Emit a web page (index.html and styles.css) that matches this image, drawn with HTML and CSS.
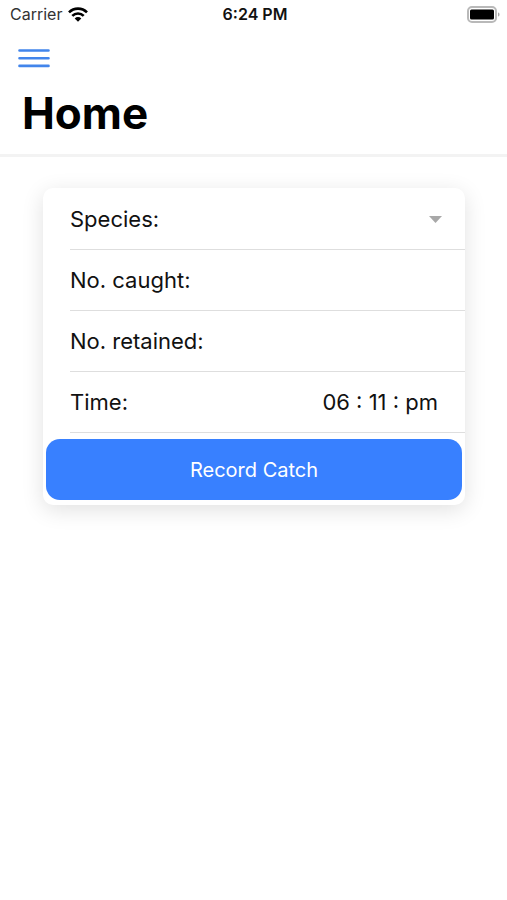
FILE: index.html
```html
<!DOCTYPE html>
<html lang="en">
<head>
<meta charset="utf-8">
<meta name="viewport" content="width=device-width, initial-scale=1">
<title>Home</title>
<link rel="stylesheet" href="styles.css">
</head>
<body>
<div class="status">
  <div class="carrier">
    <span>Carrier</span>
    <svg width="20" height="15" viewBox="0 0 20 15" aria-hidden="true">
      <g fill="none" stroke="#000" stroke-width="2.6">
        <path d="M1 5.4a12.7 12.7 0 0 1 18 0"/>
        <path d="M4.3 8.9a8 8 0 0 1 11.4 0"/>
      </g>
      <path d="M6.7 11.4a4.7 4.7 0 0 1 6.6 0L10 14.8z"/>
    </svg>
  </div>
  <span class="clock">6:24 PM</span>
  <svg class="battery" width="33" height="17" viewBox="0 0 33 17" aria-hidden="true">
    <rect x="1" y="1" width="28" height="15" rx="4" fill="#fff" stroke="#b9b9b9" stroke-width="2"/>
    <rect x="3" y="3.5" width="24" height="10" rx="1.5"/>
    <path d="M31 6.5c2 .6 2 3.4 0 4z" fill="#a8a8a8"/>
  </svg>
</div>
<header class="header">
  <button class="menu" type="button" aria-label="Menu">
    <svg width="32" height="20" viewBox="0 0 32 20" aria-hidden="true">
      <path d="M1.5 2.5h29M1.5 10.2h29M1.5 17.9h29" fill="none" stroke="#4285eb" stroke-width="2.6" stroke-linecap="round"/>
    </svg>
  </button>
  <h1>Home</h1>
</header>
<main>
  <form class="card">
    <div class="row">
      <label for="species">Species:</label>
      <select id="species" class="field"><option value=""></option></select>
      <svg width="13" height="7" viewBox="0 0 13 7" aria-hidden="true"><path d="M0 0h13L6.500 7z" fill="#a8a8a8"/></svg>
    </div>
    <div class="row">
      <label for="caught">No. caught:</label>
      <input id="caught" class="field" type="text" inputmode="numeric">
    </div>
    <div class="row">
      <label for="retained">No. retained:</label>
      <input id="retained" class="field" type="text" inputmode="numeric">
    </div>
    <div class="row">
      <label for="time">Time:</label>
      <input id="time" class="field time" type="text" value="06 : 11 : pm">
    </div>
    <button class="submit" type="button">Record Catch</button>
  </form>
</main>
</body>
</html>
```
FILE: styles.css
```css
* {
  box-sizing: border-box;
}

body {
  min-height: 100vh;
  margin: 0;
  background: #fff;
  color: #111;
  font-family: Inter, "Liberation Sans", sans-serif;
  font-size: 22px;
}

button,
input,
select {
  font: inherit;
  color: inherit;
}

.status {
  display: grid;
  grid-template-columns: 1fr auto 1fr;
  align-items: center;
  height: 28px;
  padding: 0 7px 0 10px;
  font-size: 16px;
}

.carrier {
  display: flex;
  align-items: center;
  gap: 6px;
  color: #333;
}

.clock {
  font-weight: 600;
}

.battery {
  justify-self: end;
}

.header {
  padding: 20px 18px 15px;
  border-bottom: 3px solid #f3f3f3;
}

.menu {
  display: block;
  padding: 0;
  border: 0;
  background: none;
}

.menu svg {
  display: block;
}

h1 {
  margin: 19px 4px 0;
  color: #000;
  font-size: 44px;
  line-height: 52px;
  font-weight: 700;
}

main {
  padding: 31px 42px 40px 43px;
}

.card {
  padding: 1px 0 5px;
  border-radius: 10px;
  background: #fff;
  box-shadow: 0 5px 22px rgba(0, 0, 0, 0.12);
}

.row {
  display: flex;
  align-items: center;
  height: 61px;
  margin-left: 27px;
  padding-right: 23px;
  border-bottom: 1px solid #dedede;
}

.field {
  flex: 1;
  min-width: 0;
  height: 100%;
  padding: 0;
  border: 0;
  outline: 0;
  background: none;
  appearance: none;
}

.time {
  padding-right: 4px;
  text-align: right;
}

.submit {
  display: block;
  width: calc(100% - 6px);
  height: 61px;
  margin: 6px 3px 0;
  border: 0;
  border-radius: 14px;
  background: #3880ff;
  color: #fff;
  font-size: 20px;
}
```
